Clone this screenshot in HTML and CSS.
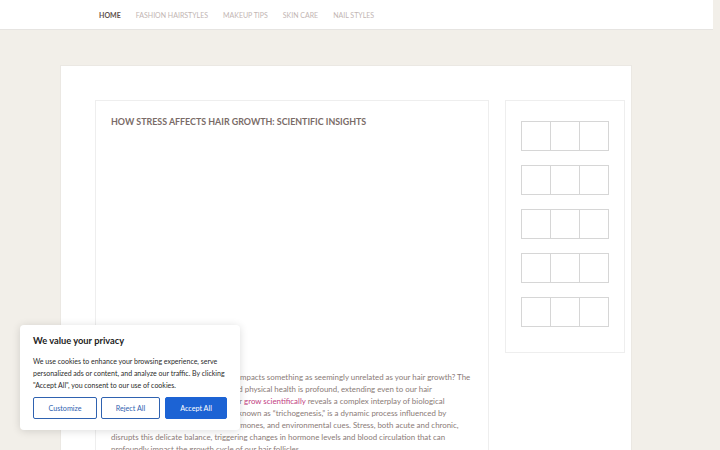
FILE: index.html
```html
<!DOCTYPE html>
<html lang="en">
<head>
  <meta charset="UTF-8">
  <title>How Stress Affects Hair Growth: Scientific Insights</title>
  <link rel="stylesheet" href="styles.css">
</head>
<body>
  <header class="topbar">
    <nav class="menu">
      <a class="menu-item active" href="#">Home</a>
      <a class="menu-item" href="#">Fashion Hairstyles</a>
      <a class="menu-item" href="#">Makeup Tips</a>
      <a class="menu-item" href="#">Skin Care</a>
      <a class="menu-item" href="#">Nail Styles</a>
    </nav>
  </header>

  <div class="page">
    <main class="article">
      <h1 class="article-title">How Stress Affects Hair Growth: Scientific Insights</h1>
      <div class="article-media"></div>
      <p class="article-text">
        Have you ever wondered how stress impacts something as seemingly unrelated as your hair growth? The<br>
        relation between our mental state and physical health is profound, extending even to our hair<br>
        follicles. Understanding how does hair <a href="#">grow scientifically</a> reveals a complex interplay of biological<br>
        processes. Hair growth, scientifically known as &ldquo;trichogenesis,&rdquo; is a dynamic process influenced by<br>
        the balance of genetics, nutrition, hormones, and environmental cues. Stress, both acute and chronic,<br>
        disrupts this delicate balance, triggering changes in hormone levels and blood circulation that can<br>
        profoundly impact the growth cycle of our hair follicles.
      </p>
    </main>

    <aside class="sidebar">
      <div class="thumb-row"><span></span><span></span><span></span></div>
      <div class="thumb-row"><span></span><span></span><span></span></div>
      <div class="thumb-row"><span></span><span></span><span></span></div>
      <div class="thumb-row"><span></span><span></span><span></span></div>
      <div class="thumb-row"><span></span><span></span><span></span></div>
    </aside>
  </div>

  <div class="consent">
    <h2>We value your privacy</h2>
    <p>We use cookies to enhance your browsing experience, serve personalized ads or content, and analyze our traffic. By clicking "Accept All", you consent to our use of cookies.</p>
    <div class="consent-buttons">
      <button class="btn btn-outline btn-customize" type="button">Customize</button>
      <button class="btn btn-outline btn-reject" type="button">Reject All</button>
      <button class="btn btn-solid" type="button">Accept All</button>
    </div>
  </div>
</body>
</html>
```

FILE: styles.css
```css
body { margin: 0; background: #f2efe9; font-family: Lato, "Noto Sans", sans-serif; height: 450px; overflow: hidden; }

.topbar { background: #fff; height: 30px; margin-right: 7px; border-bottom: 1px solid #e6e4e1; box-sizing: border-box; }
.menu { display: flex; align-items: center; height: 29px; padding-left: 99px; gap: 15px; }
.menu-item { font-size: 7px; text-transform: uppercase; text-decoration: none; color: #c2b5b3; }
.menu-item.active { color: #5e504c; font-weight: 700; }

.page { margin: 35px 0 0 60px; width: 572px; height: 400px; background: #fff; border: 1px solid #ebe8e3; box-sizing: border-box; display: flex; align-items: flex-start; gap: 16px; padding: 34px 0 0 34px; }

.article { width: 394px; height: 380px; border: 1px solid #eeeeee; box-sizing: border-box; padding: 15px 15px 0 15px; }
.article-title { margin: 0; font-size: 8.9px; font-weight: 700; color: #7a6b67; text-transform: uppercase; }
.article-media { height: 244px; }
.article-text { margin: 0; font-size: 7.9px; line-height: 12px; color: #8a7b77; white-space: nowrap; }
.article-text a { color: #c13d7f; text-decoration: none; }

.sidebar { width: 120px; height: 253px; border: 1px solid #eeeeee; box-sizing: border-box; padding: 20px 0 0 15px; display: flex; flex-direction: column; gap: 14px; }
.thumb-row { display: flex; }
.thumb-row span { width: 30px; height: 30px; border: 1px solid #d6d6d6; box-sizing: border-box; margin-right: -1px; }

.consent { position: absolute; left: 20px; top: 325px; width: 220px; height: 105px; background: #fff; border-radius: 4px; box-shadow: 0 1px 8px rgba(0,0,0,0.14); box-sizing: border-box; padding: 10px 12px 10px 13px; }
.consent h2 { margin: 0; font-size: 9.3px; font-weight: 700; color: #222; line-height: 12px; }
.consent p { margin: 8px 0 0; font-size: 7px; line-height: 12px; color: #2a2a2a; }
.consent-buttons { display: flex; gap: 4px; margin-top: 6px; }
.btn { height: 22px; font-family: Lato, "Noto Sans", sans-serif; font-size: 7.2px; border-radius: 2px; box-sizing: border-box; padding: 0; cursor: pointer; }
.btn-outline { background: #fff; color: #2f62b0; border: 1px solid #2f62b0; }
.btn-customize { width: 64px; }
.btn-reject { width: 59px; }
.btn-solid { width: 62px; margin-left: 1px; background: #1c63d4; color: #fff; border: 1px solid #1c63d4; }
```
